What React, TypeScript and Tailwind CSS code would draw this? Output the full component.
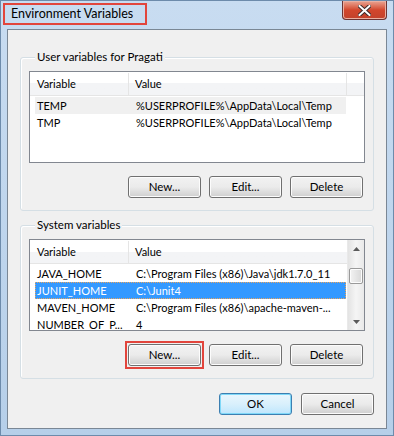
// Environment Variables dialog (Windows 7 style)
const FONT = { fontFamily: 'Lato, "Noto Sans", "Liberation Sans", sans-serif' }

type Row = { name: string; value: string }

const USER_ROWS: Row[] = [
  { name: 'TEMP', value: '%USERPROFILE%\\AppData\\Local\\Temp' },
  { name: 'TMP', value: '%USERPROFILE%\\AppData\\Local\\Temp' },
]

const SYSTEM_ROWS: Row[] = [
  { name: 'JAVA_HOME', value: 'C:\\Program Files (x86)\\Java\\jdk1.7.0_11' },
  { name: 'JUNIT_HOME', value: 'C:\\Junit4' },
  { name: 'MAVEN_HOME', value: 'C:\\Program Files (x86)\\apache-maven-...' },
  { name: 'NUMBER_OF_P...', value: '4' },
]

const Button = ({ label, isDefault = false }: { label: string; isDefault?: boolean }) => (
  <div
    className={[
      'flex h-[22px] w-[73px] items-center justify-center rounded-[3px] border text-[11.5px] text-black',
      isDefault
        ? 'border-[#3c7fb1] bg-gradient-to-b from-[#eaf6fd] via-[#d9f0fc] to-[#bee6fd] shadow-[inset_0_0_0_1px_#7fd8f8]'
        : 'border-[#707070] bg-gradient-to-b from-[#f2f2f2] via-[#ebebeb] to-[#cfcfcf] shadow-[inset_0_0_0_1px_#fcfcfc]',
    ].join(' ')}
  >
    {label}
  </div>
)

const Header = ({ extraCol }: { extraCol: boolean }) => (
  <div className="flex h-[24px] border-b border-[#e5e5e5] bg-gradient-to-b from-white from-50% to-[#f3f4f6] to-50% pt-[1px] text-[11px]">
    <div className="flex w-[99px] shrink-0 items-center border-r border-[#e5e5e5] pl-[7px]">Variable</div>
    <div className={['flex items-center pl-[6px]', extraCol ? 'w-[218px] shrink-0 border-r border-[#e5e5e5]' : 'flex-1'].join(' ')}>
      Value
    </div>
    {extraCol && <div className="flex-1" />}
  </div>
)

const ListRow = ({ row, state }: { row: Row; state: 'none' | 'inactive' | 'active' }) => (
  <div className="flex h-[17px] items-center pl-[5px] text-[11px]">
    <div
      className={[
        'flex h-[17px] w-[311px] shrink-0 items-center pt-[1px]',
        state === 'active' ? 'bg-[#3399ff] text-white outline-1 -outline-offset-1 outline-dotted outline-[#e9a55d]' : '',
        state === 'inactive' ? 'bg-[#f0f0f0]' : '',
      ].join(' ')}
    >
      <div className="w-[94px] shrink-0 overflow-hidden whitespace-nowrap pl-[2px]">{row.name}</div>
      <div className="whitespace-nowrap pl-[7px]">{row.value}</div>
    </div>
  </div>
)

const ScrollBar = () => (
  <div className="flex w-[17px] flex-col border-l border-[#e9e9e9] bg-gradient-to-r from-[#e3e3e3] via-[#f5f5f5] to-[#e9e9e9]">
    <div className="flex h-[17px] items-center justify-center">
      <svg width="7" height="4" viewBox="0 0 7 4"><path d="M0 4 L3.5 0 L7 4 Z" fill="#5b5b5b" /></svg>
    </div>
    <div className="mx-[1px] mt-[11px] h-[16px] rounded-[2px] border border-[#9a9a9a] bg-gradient-to-r from-[#f3f3f3] to-[#d8d8d8] shadow-[inset_0_0_0_1px_#fcfcfc]" />
    <div className="flex-1" />
    <div className="flex h-[17px] items-center justify-center">
      <svg width="7" height="4" viewBox="0 0 7 4"><path d="M0 0 L7 0 L3.5 4 Z" fill="#5b5b5b" /></svg>
    </div>
  </div>
)

const Group = ({ title, children }: { title: string; children: React.ReactNode }) => (
  <div className="rounded-[3px] border border-[#d5dfe5] px-[8px] pb-[12px] shadow-[inset_1px_1px_0_white]">
    <div className="-mt-[9px] mb-[6px] ml-[6px] w-fit bg-[#f0f0f0] px-[2px] text-[11.5px] leading-[16px]">{title}</div>
    {children}
  </div>
)

const Buttons = ({ boxed }: { boxed?: boolean }) => (
  <div className="mt-[13px] flex justify-end gap-[8px] pr-[2px]">
    <div className={boxed ? '-m-[3px] border-2 border-[#e2453c] p-[1px]' : ''}>
      <Button label="New..." />
    </div>
    <Button label="Edit..." />
    <Button label="Delete" />
  </div>
)

export default function App() {
  return (
    <div style={FONT} className="relative h-[436px] w-[394px] overflow-hidden border border-[#6d8bab] bg-gradient-to-b from-[#c8dcf1] to-[#b6cfe9] text-black">
      {/* title bar */}
      <div className="flex h-[28px] items-start justify-between">
        <div className="ml-[2px] mt-[2px] flex h-[22px] w-[144px] items-center whitespace-nowrap border-2 border-[#e2453c] pl-[6px] text-[12.5px]">
          Environment Variables
        </div>
        <div className="mr-[6px] flex h-[19px] w-[45px] items-center justify-center rounded-b-[4px] border border-t-0 border-[#6b3434] bg-gradient-to-b from-[#e8a493] via-[#d2462c] to-[#c2412b] shadow-[inset_0_0_0_1px_#eab0a2]">
          <svg width="13" height="11" viewBox="0 0 13 11">
            <path d="M1.5 1 L11.5 10 M11.5 1 L1.5 10" stroke="#3b2b2b" strokeWidth="4" strokeLinecap="square" />
            <path d="M1.5 1 L11.5 10 M11.5 1 L1.5 10" stroke="white" strokeWidth="2" strokeLinecap="square" />
          </svg>
        </div>
      </div>

      {/* client area */}
      <div className="mx-[6px] h-[400px] border border-[#7a8795] bg-[#f0f0f0] px-[12px] pt-[27px]">
        <Group title="User variables for Pragati">
          <div className="h-[92px] border border-[#828790] bg-white">
            <Header extraCol />
            <div className="pt-[1px]">
              {USER_ROWS.map((r, i) => (
                <ListRow key={r.name} row={r} state={i === 0 ? 'inactive' : 'none'} />
              ))}
            </div>
          </div>
          <Buttons />
        </Group>

        <div className="h-[14px]" />

        <Group title="System variables">
          <div className="flex h-[92px] border border-[#828790] bg-white">
            <div className="min-w-0 flex-1 overflow-hidden">
              <Header extraCol={false} />
              <div className="pt-[1px]">
                {SYSTEM_ROWS.map((r) => (
                  <ListRow key={r.name} row={r} state={r.name === 'JUNIT_HOME' ? 'active' : 'none'} />
                ))}
              </div>
            </div>
            <ScrollBar />
          </div>
          <Buttons boxed />
        </Group>

        <div className="mt-[14px] flex justify-end gap-[9px]">
          <Button label="OK" isDefault />
          <Button label="Cancel" />
        </div>
      </div>
    </div>
  )
}
